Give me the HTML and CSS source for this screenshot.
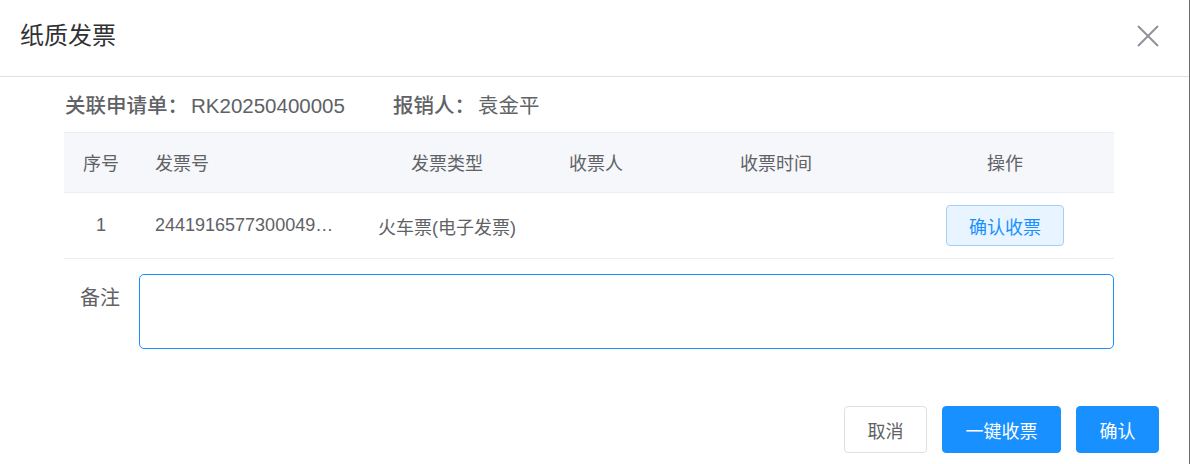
FILE: index.html
```html
<!DOCTYPE html>
<html lang="zh-CN">
<head>
<meta charset="utf-8">
<title>纸质发票</title>
<link rel="stylesheet" href="styles.css">
</head>
<body>
<div class="dialog">
  <div class="dialog-header">
    <span class="dialog-title">纸质发票</span>
    <button class="close-btn" aria-label="关闭">
      <svg width="22" height="22" viewBox="0 0 22 22"><path d="M1 1 L21 21 M21 1 L1 21" stroke="#909399" stroke-width="2" fill="none"/></svg>
    </button>
  </div>
  <div class="dialog-body">
    <div class="info-row">
      <span class="info-item"><span class="info-label">关联申请单：</span><span class="info-value">RK20250400005</span></span>
      <span class="info-item"><span class="info-label">报销人：</span><span class="info-value">袁金平</span></span>
    </div>
    <table class="invoice-table">
      <colgroup>
        <col class="c1"><col class="c2"><col class="c3"><col class="c4"><col class="c5"><col class="c6">
      </colgroup>
      <thead>
        <tr>
          <th class="center">序号</th>
          <th class="left">发票号</th>
          <th class="center">发票类型</th>
          <th class="center">收票人</th>
          <th class="center">收票时间</th>
          <th class="center op">操作</th>
        </tr>
      </thead>
      <tbody>
        <tr>
          <td class="center">1</td>
          <td class="left ellipsis">24419165773000498765</td>
          <td class="center">火车票(电子发票)</td>
          <td class="center"></td>
          <td class="center"></td>
          <td class="center op"><button class="btn-light">确认收票</button></td>
        </tr>
      </tbody>
    </table>
    <div class="remark-row">
      <label class="remark-label">备注</label>
      <div class="remark-input" contenteditable="true"></div>
    </div>
  </div>
  <div class="dialog-footer">
    <button class="btn btn-default">取消</button>
    <button class="btn btn-primary wide">一键收票</button>
    <button class="btn btn-primary">确认</button>
  </div>
</div>
</body>
</html>
```

FILE: styles.css
```css
* { box-sizing: border-box; }
html, body { margin: 0; padding: 0; }
body {
  background: #6d6d6d;
  font-family: "Liberation Sans", "Noto Sans CJK SC", sans-serif;
  width: 1190px;
  height: 464px;
  overflow: hidden;
}
.dialog {
  width: 1189px;
  height: 464px;
  background: #fff;
}
.dialog-header {
  height: 77px;
  border-bottom: 1px solid #dcdfe6;
  display: flex;
  align-items: center;
  justify-content: space-between;
  padding: 0 30px 4px 20px;
}
.dialog-title {
  font-size: 24px;
  color: #303133;
  line-height: 32px;
}
.close-btn {
  border: none;
  background: none;
  padding: 0;
  width: 22px;
  height: 22px;
  display: flex;
}
.dialog-body {
  padding: 13px 75px 0 64px;
}
.info-row {
  display: flex;
  gap: 48px;
  height: 28px;
  align-items: center;
  padding-left: 1px;
  font-size: 20.5px;
  color: #606266;
}
.info-label { font-weight: 500; }
.info-value { margin-left: 3px; }
.invoice-table {
  margin-top: 14px;
  width: 1050px;
  border-collapse: collapse;
  table-layout: fixed;
  font-size: 18px;
  color: #606266;
}
.c1 { width: 74px; }
.c2 { width: 212px; }
.c3 { width: 194px; }
.c4 { width: 104px; }
.c5 { width: 256px; }
.c6 { width: 210px; }
.invoice-table th {
  background: #f5f7fa;
  font-weight: normal;
  height: 60px;
  border-top: 1px solid #ebeef5;
  border-bottom: 1px solid #ebeef5;
  padding: 0 0 2px;
}
.invoice-table td {
  height: 66px;
  border-bottom: 1px solid #ebeef5;
  padding: 0;
}
.center { text-align: center; }
.left { text-align: left; padding-left: 17px !important; padding-right: 16px !important; }
.op { padding-right: 8px !important; }
.ellipsis {
  white-space: nowrap;
  overflow: hidden;
  text-overflow: ellipsis;
}
.btn-light {
  width: 118px;
  height: 41px;
  border: 1px solid #a3d0fd;
  background: #e8f4ff;
  color: #1890ff;
  border-radius: 4px;
  font-family: inherit;
  font-size: 18px;
  padding: 0;
}
.remark-row {
  display: flex;
  margin-top: 15px;
}
.remark-label {
  width: 75px;
  text-align: right;
  padding-right: 19px;
  font-size: 20px;
  color: #606266;
  line-height: 28px;
  padding-top: 10px;
}
.remark-input {
  width: 975px;
  height: 75px;
  border: 1px solid #1890ff;
  border-radius: 5px;
  background: #fff;
  outline: none;
}
.dialog-footer {
  display: flex;
  justify-content: flex-end;
  gap: 15px;
  padding: 57px 30px 0 0;
}
.btn {
  height: 47px;
  width: 83px;
  border-radius: 4px;
  font-family: inherit;
  font-size: 18px;
  padding: 0;
}
.btn.wide { width: 119px; }
.btn-default {
  background: #fff;
  border: 1px solid #dcdfe6;
  color: #606266;
}
.btn-primary {
  background: #1890ff;
  border: 1px solid #1890ff;
  color: #fff;
}
```
